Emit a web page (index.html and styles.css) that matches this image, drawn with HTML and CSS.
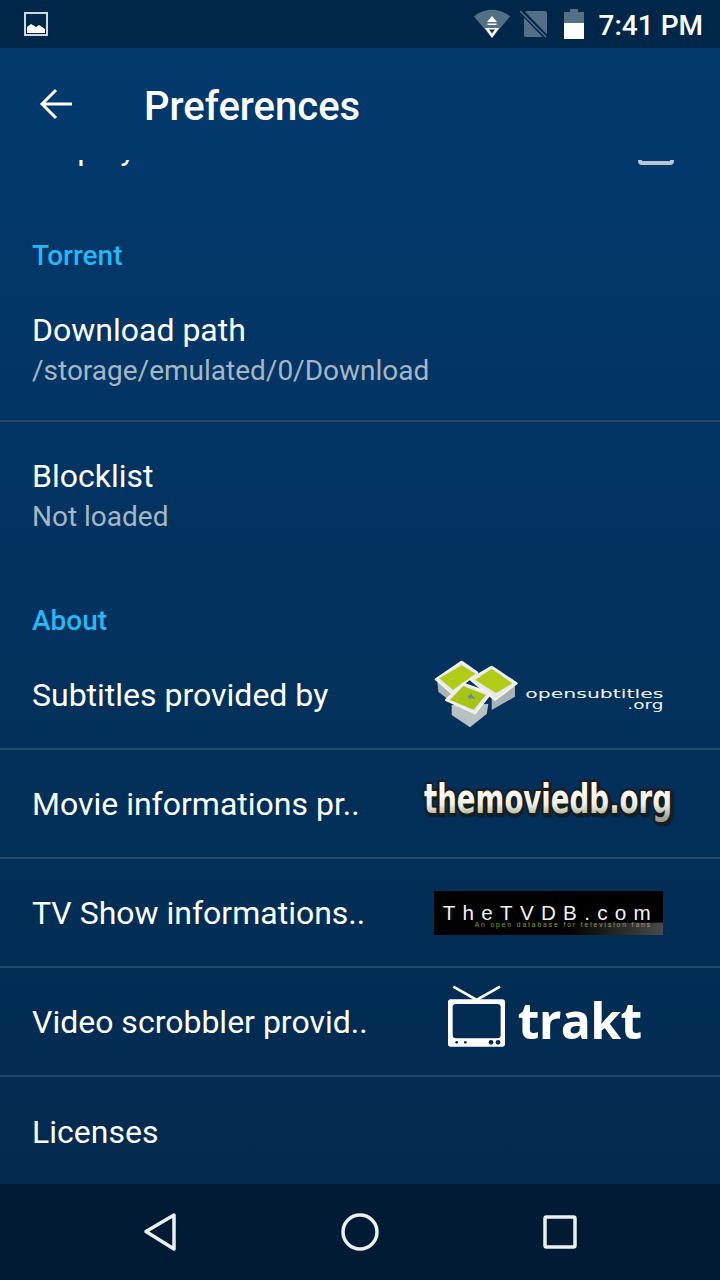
FILE: index.html
```html
<!DOCTYPE html>
<html lang="en">
<head>
    <meta charset="UTF-8">
    <meta name="viewport" content="width=device-width, initial-scale=1.0">
    <title>Preferences</title>
    <link rel="stylesheet" href="styles.css">
</head>
<body>
    <div class="screen">
        <div class="statusbar">
            <svg class="icon-picture" width="24" height="24" viewBox="0 0 24 24">
                <rect x="1" y="1" width="22" height="22" fill="none" stroke="#cfd6dc" stroke-width="2"/>
                <path d="M3 21v-6l4-3 5 3 3-2 6 4v4z" fill="#fff"/>
            </svg>
            <div class="status-right">
                <svg class="icon-wifi" width="36" height="30" viewBox="0 0 36 30">
                    <path d="M0 7.500C10-1.500 26-1.500 36 7.500L18 29z" fill="#547087"/>
                    <path d="M18 7l5 6H13zM13.500 14.500h9v1.500h-9z" fill="#fff"/>
                    <path d="M11 19h14l-7 10z" fill="#fff"/>
                    <path d="M15 20.500h6l-3 4z" fill="#0b3150"/>
                </svg>
                <svg class="icon-sim" width="28" height="28" viewBox="0 0 28 28">
                    <path d="M4 4q0-3 3-3h17q3 0 3 3v21q0 2-2 2H6q-2 0-2-2z" fill="#547087"/>
                    <path d="M1 1l25 26" stroke="#00274a" stroke-width="5" fill="none"/>
                    <path d="M0 1l26 26" stroke="#547087" stroke-width="1.500" fill="none"/>
                </svg>
                <svg class="icon-battery" width="20" height="30" viewBox="0 0 20 30">
                    <path d="M6 0h8v3h6v14H0V3h6z" fill="#547087"/>
                    <rect y="14" width="20" height="16" fill="#fff"/>
                </svg>
                <span class="clock">7:41 PM</span>
            </div>
        </div>

        <div class="appbar">
            <svg class="back-arrow" width="34" height="32" viewBox="0 0 34 32">
                <path d="M33 16H4M17 2L3 16l14 14" fill="none" stroke="#fff" stroke-width="3"/>
            </svg>
            <h1>Preferences</h1>
        </div>

        <div class="list">
            <div class="row row-scrolled">
                <span class="pref-title">Display a hint on screen</span>
                <span class="checkbox"></span>
            </div>

            <div class="section-title">Torrent</div>
            <div class="row row-double">
                <div class="pref-title">Download path</div>
                <div class="pref-sub">/storage/emulated/0/Download</div>
            </div>
            <div class="row row-double no-border">
                <div class="pref-title">Blocklist</div>
                <div class="pref-sub">Not loaded</div>
            </div>

            <div class="section-title">About</div>
            <div class="row">
                <span class="pref-title">Subtitles provided by</span>
                <svg class="logo" viewBox="0 -27 780 324">
                    <g stroke-linejoin="round">
                        <path d="M52 95l3 30 35 28 40-25V90z" fill="#a9b3b5"/>
                        <path d="M47 88l78-53 47 33-77 62z" fill="#e6e8e6" stroke="#f2f3f1" stroke-width="6"/>
                        <path d="M58 85l67-39 42 25-68 49z" fill="#b1cc16"/>
                        <path d="M215 125v55l70-40V95z" fill="#a9b3b5"/>
                        <path d="M150 88l65-38 75 50-65 50z" fill="#e6e8e6" stroke="#f2f3f1" stroke-width="6"/>
                        <path d="M166 90l49-34 62 44-49 29z" fill="#b1cc16"/>
                        <path d="M95 165v30l55 37 50-40 5-30z" fill="#b7c0c2"/>
                        <path d="M78 150l52-50 82 30-47 60z" fill="#e6e8e6" stroke="#f2f3f1" stroke-width="6"/>
                        <path d="M90 150l40-42 68 27-37 44z" fill="#a7c414"/>
                        <path d="M142 140l14-10v6l10 8-6 3-6-4-2 5z" fill="#5d8fa0"/>
                    </g>
                    <text class="os-text" x="316" y="145" textLength="414" lengthAdjust="spacingAndGlyphs">opensubtitles</text>
                    <text class="os-text" x="622" y="178" textLength="108" lengthAdjust="spacingAndGlyphs">.org</text>
                </svg>
            </div>
            <div class="row">
                <span class="pref-title">Movie informations pr..</span>
                <svg class="logo" viewBox="0 300 780 324">
                    <defs>
                        <linearGradient id="tmdbFill" x1="0" y1="0" x2="0" y2="1">
                            <stop offset="0.15" stop-color="#ffffff"/>
                            <stop offset="0.6" stop-color="#eef0e8"/>
                            <stop offset="0.9" stop-color="#98a28c"/>
                        </linearGradient>
                    </defs>
                    <text class="tmdb-shadow" x="12" y="496" textLength="752" lengthAdjust="spacingAndGlyphs">themoviedb.org</text>
                    <text class="tmdb-text" x="12" y="490" textLength="744" lengthAdjust="spacingAndGlyphs" fill="url(#tmdbFill)">themoviedb.org</text>
                </svg>
            </div>
            <div class="row">
                <span class="pref-title">TV Show informations..</span>
                <svg class="logo" viewBox="0 -63 780 324">
                    <defs>
                        <linearGradient id="tvdbStreak" x1="0" y1="0" x2="1" y2="0">
                            <stop offset="0" stop-color="#000"/>
                            <stop offset="1" stop-color="#4a4a4a"/>
                        </linearGradient>
                        <linearGradient id="tvdbTag" x1="0" y1="0" x2="1" y2="0">
                            <stop offset="0.3" stop-color="#8aa80f"/>
                            <stop offset="1" stop-color="#9a9a8a"/>
                        </linearGradient>
                    </defs>
                    <rect x="42" y="33" width="687" height="132" fill="#000"/>
                    <rect x="440" y="128" width="289" height="37" fill="url(#tvdbStreak)"/>
                    <text class="tvdb-name" x="68" y="119" textLength="624">TheTVDB.com</text>
                    <text class="tvdb-tag" x="164" y="141" textLength="526" fill="url(#tvdbTag)">An open database for television fans</text>
                </svg>
            </div>
            <div class="row">
                <span class="pref-title">Video scrobbler provid..</span>
                <svg class="logo" viewBox="0 264 780 324">
                    <path d="M100 320l70 40 70-40" fill="none" stroke="#fff" stroke-width="8"/>
                    <path fill-rule="evenodd" fill="#fff" d="M92 358h155q8 0 8 8v126q0 8-8 8H92q-8 0-8-8V366q0-8 8-8zM108 372q-10 0-10 10v83q0 10 10 10h124q10 0 10-10v-83q0-10-10-10z"/>
                    <circle cx="110" cy="487" r="4" fill="#00294d"/>
                    <circle cx="136" cy="487" r="4" fill="#00294d"/>
                    <circle cx="213" cy="487" r="7" fill="#00294d"/>
                    <circle cx="234" cy="487" r="7" fill="#00294d"/>
                    <text class="trakt-text" x="293" y="476" textLength="374">trakt</text>
                </svg>
            </div>
            <div class="row no-border">
                <span class="pref-title">Licenses</span>
            </div>
        </div>

        <div class="navbar">
            <svg width="34" height="40" viewBox="0 0 34 40">
                <path d="M31 3L3 19.500 31 37z" fill="none" stroke="#eceff1" stroke-width="3.500" stroke-linejoin="round"/>
            </svg>
            <svg width="38" height="38" viewBox="0 0 38 38">
                <circle cx="19" cy="19" r="17" fill="none" stroke="#eceff1" stroke-width="3.500"/>
            </svg>
            <svg width="34" height="34" viewBox="0 0 34 34">
                <rect x="2" y="2" width="30" height="30" rx="1.500" fill="none" stroke="#eceff1" stroke-width="3.500"/>
            </svg>
        </div>
    </div>
</body>
</html>
```

FILE: styles.css
```css
* { box-sizing: border-box; }
html, body { margin: 0; padding: 0; }
body { width: 720px; height: 1280px; overflow: hidden; font-family: Roboto, "Noto Sans", sans-serif; color: #fff; }

.screen { display: flex; flex-direction: column; height: 1280px; background: linear-gradient(#023a6e 48px, #022a4e 1184px); }

.statusbar { display: flex; align-items: center; justify-content: space-between; height: 48px; flex: none; padding: 0 17px 0 24px; background: #00274a; }
.status-right { display: flex; align-items: center; }
.icon-wifi { margin-right: 10px; margin-top: -1px; }
.icon-sim { margin-right: 16px; }
.icon-battery { margin-right: 15px; }
.clock { font-size: 28px; font-weight: 500; margin-top: 2px; }

.appbar { display: flex; align-items: center; height: 112px; flex: none; padding-left: 39px; }
.appbar h1 { margin: 4px 0 0 71px; font-size: 40px; font-weight: 500; }

.list { flex: 1; min-height: 0; overflow: hidden; }

.row { display: flex; align-items: center; justify-content: space-between; height: 109px; padding: 0 40px 0 32px; border-bottom: 2px solid #23496b; }
.row-scrolled { margin-top: -65px; height: 108px; border-bottom: 0; }
.row-scrolled .checkbox { margin-bottom: 4px; }
.row-double { display: block; height: 146px; padding-top: 33px; }
.no-border { border-bottom: 0; }

.section-title { display: flex; align-items: center; height: 73px; padding: 32px 0 0 32px; font-size: 28px; font-weight: 500; color: #29b6f6; }
.pref-title { font-size: 32px; line-height: 42px; white-space: nowrap; }
.pref-sub { font-size: 28px; line-height: 40px; color: #a6b6c4; }

.checkbox { width: 36px; height: 36px; margin-right: 6px; border: 4px solid #b4c6d5; border-radius: 4px; }

.logo { width: 260px; height: 108px; flex: none; }
.os-text { font-family: "DejaVu Sans", sans-serif; font-size: 38px; fill: #eef1f2; }
.tmdb-text, .tmdb-shadow { font-family: "DejaVu Sans", sans-serif; font-weight: 700; font-size: 122px; }
.tmdb-text { stroke: #1c1c18; stroke-width: 14px; paint-order: stroke; stroke-linejoin: round; }
.tmdb-shadow { fill: #14140f; stroke: #14140f; stroke-width: 14px; stroke-linejoin: round; opacity: 0.55; }
.tvdb-name { font-family: "Liberation Sans", sans-serif; font-size: 62px; fill: #f2f2f2; }
.tvdb-tag { font-family: "Liberation Sans", sans-serif; font-size: 20px; }
.trakt-text { font-family: "Open Sans", sans-serif; font-weight: 700; font-size: 150px; fill: #fff; }

.navbar { display: flex; align-items: center; justify-content: space-between; height: 96px; flex: none; padding: 0 143px; background: #001b33; }
```
